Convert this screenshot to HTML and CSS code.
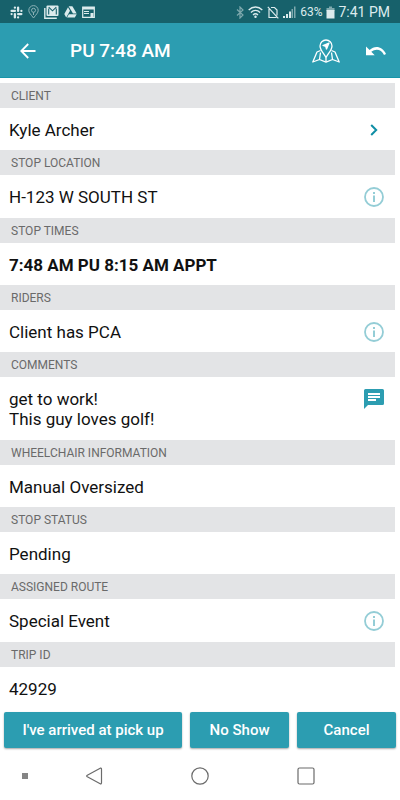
FILE: index.html
```html
<!DOCTYPE html>
<html lang="en">
<head>
    <meta charset="UTF-8">
    <meta name="viewport" content="width=device-width, initial-scale=1.0">
    <title>PU 7:48 AM</title>
    <link rel="stylesheet" href="styles.css">
</head>
<body>
    <svg class="defs" width="0" height="0">
        <symbol id="info" viewBox="0 0 20 20">
            <circle cx="10" cy="10" r="9" fill="none" stroke="currentColor" stroke-width="1.8"/>
            <path d="M9 5h2v2H9zM9 8.400h2V15H9z" fill="currentColor"/>
        </symbol>
    </svg>
    <div class="status">
        <div class="status-left">
            <svg width="13" height="13" viewBox="0 0 13 13" fill="none" stroke="#dcebed" stroke-width="2.300" stroke-linecap="round">
                <path d="M4.900 1.600v.1M1.600 4.900h3.300M8.100 1.600v3.300M11.400 4.900v0M11.400 8.100H8.100M8.100 11.400v0M4.900 11.400V8.100M1.600 8.100v0"/>
            </svg>
            <svg class="pin" width="11" height="14" viewBox="0 0 11 14" fill="none" stroke="#8db3b8">
                <path d="M5.500 13C3 9.500.8 8 .8 5.300a4.700 4.700 0 0 1 9.400 0C10.200 8 8 9.500 5.500 13z"/>
                <circle cx="5.500" cy="5.300" r="2"/>
                <path d="M5.500 7.300V10"/>
            </svg>
            <svg width="15" height="14" viewBox="0 0 15 14">
                <path d="M.8 3v10.200h12" fill="none" stroke="#dcebed" stroke-width="1.400"/>
                <rect x="2.500" y=".5" width="12" height="10.500" rx="1" fill="#dcebed"/>
                <path d="M4.700 2.200l3.800 3.600 3.800-3.600M4.700 9.500V3.500M12.300 9.500V3.500" fill="none" stroke="#17616b" stroke-width="1.100"/>
            </svg>
            <svg width="13" height="12" viewBox="0 0 13 12" fill="#dcebed">
                <path d="M4.600.3h3.800l4.300 7.200H9z"/>
                <path d="M4 1.300L6 4.700 2.200 11.400.3 8z"/>
                <path d="M4.900 8.200h7.800l-1.900 3.300H3z"/>
            </svg>
            <svg width="13" height="12" viewBox="0 0 13 12">
                <path d="M.7 1h11.600v10.300H.7z" fill="none" stroke="#dcebed" stroke-width="1.200"/>
                <path d="M.7 1h11.600v2.500H.7zM2 5h5v1H2zM2 7h5v1H2zM8.500 7h3v4h-3z" fill="#dcebed"/>
            </svg>
        </div>
        <div class="status-right">
            <svg width="8" height="13" viewBox="0 0 8 13" fill="none" stroke="#7fa9ae" stroke-width="1.200">
                <path d="M1 3.500l6 5.500-3 3V1l3 3-6 5.500"/>
            </svg>
            <svg width="15" height="12" viewBox="0 0 15 12" fill="none" stroke="#dcebed" stroke-width="1.300">
                <path d="M.7 4c4-4 9.600-4 13.600 0M2.900 6.500c2.800-2.800 6.400-2.800 9.200 0M5 9c1.500-1.500 3.500-1.500 5 0"/>
                <circle cx="7.500" cy="10.700" r=".6"/>
            </svg>
            <svg width="12" height="13" viewBox="0 0 12 13" fill="none" stroke="#dcebed" stroke-width="1.200">
                <path d="M4 1.500h3.500L10 4v5.500M2 3v8.500h7.500M.8.8l10.500 11.500"/>
            </svg>
            <svg width="13" height="12" viewBox="0 0 13 12">
                <path d="M0 10h2v2H0zM3 8h2v4H3zM6 5.500h2V12H6z" fill="#dcebed"/>
                <path d="M8.500 3h1.500v9H8.500zM11 .5h1.500V12H11z" fill="#7fa9ae"/>
            </svg>
            <span class="percent">63%</span>
            <svg width="9" height="13" viewBox="0 0 9 13">
                <path d="M3 .5h3V2h2.500v3h-8V2H3z" fill="#7fa9ae"/>
                <path d="M.5 4h8v8.500h-8z" fill="#dcebed"/>
            </svg>
            <span class="clock">7:41 PM</span>
        </div>
    </div>

    <header class="appbar">
        <button class="icon-btn" aria-label="Back">
            <svg width="16" height="16" viewBox="0 0 16 16" fill="none" stroke="#fff" stroke-width="1.800">
                <path d="M15.500 8H1.500M8.200 1L1.300 8l6.900 7"/>
            </svg>
        </button>
        <h1>PU 7:48 AM</h1>
        <button class="icon-btn" aria-label="Map">
            <svg width="28" height="24" viewBox="0 0 28 24" fill="none" stroke="#fff" stroke-width="1.300" stroke-linejoin="round">
                <path d="M14 18.500C11.500 14 8 11 8 7a6 6 0 0 1 12 0c0 4-3.500 7-6 11.500z"/>
                <path d="M17 4l-2.500 6-.8-2.700L11 6.500z" fill="#fff"/>
                <path d="M8.500 11.500L5 13 .8 23l6.700-2.500L14 23.200l6.500-2.700 6.700 2.500L23 13l-3.500-1.500"/>
                <path d="M8.500 13.500l-1 7M19.500 13.500l1 7M14 18.500v4.500"/>
            </svg>
        </button>
        <button class="icon-btn" aria-label="Undo">
            <svg width="20" height="10" viewBox="0 0 20 10">
                <path d="M0 .5v8.700h8.700L5.300 5.800C9.500 2.300 15.500 3 18 9l2-1C16.500.5 9-1.200 3.600 4.100z" fill="#fff"/>
            </svg>
        </button>
    </header>

    <main class="details">
        <h2>CLIENT</h2>
        <div class="row">
            <p>Kyle Archer</p>
            <button class="icon-btn" aria-label="Open client">
                <svg width="20" height="12" viewBox="0 0 20 12" fill="none" stroke="#0f8ea5" stroke-width="2">
                    <path d="M7.200 1l5 5-5 5"/>
                </svg>
            </button>
        </div>
        <h2>STOP LOCATION</h2>
        <div class="row">
            <p>H-123 W SOUTH ST</p>
            <button class="icon-btn info" aria-label="Location info"><svg width="20" height="20"><use href="#info"/></svg></button>
        </div>
        <h2>STOP TIMES</h2>
        <div class="row">
            <p class="strong">7:48 AM PU 8:15 AM APPT</p>
        </div>
        <h2>RIDERS</h2>
        <div class="row">
            <p>Client has PCA</p>
            <button class="icon-btn info" aria-label="Rider info"><svg width="20" height="20"><use href="#info"/></svg></button>
        </div>
        <h2>COMMENTS</h2>
        <div class="row top">
            <p>get to work!<br>This guy loves golf!</p>
            <button class="icon-btn" aria-label="Comments">
                <svg width="20" height="20" viewBox="0 0 20 20">
                    <path d="M1.500 0h17A1.500 1.500 0 0 1 20 1.500v13a1.500 1.500 0 0 1-1.500 1.500H4l-4 4V1.500A1.500 1.500 0 0 1 1.500 0z" fill="#2c9db1"/>
                    <path d="M4 4h12v2H4zM4 7h12v2H4zM4 10h8v2H4z" fill="#fff"/>
                </svg>
            </button>
        </div>
        <h2>WHEELCHAIR INFORMATION</h2>
        <div class="row">
            <p>Manual Oversized</p>
        </div>
        <h2>STOP STATUS</h2>
        <div class="row">
            <p>Pending</p>
        </div>
        <h2>ASSIGNED ROUTE</h2>
        <div class="row">
            <p>Special Event</p>
            <button class="icon-btn info" aria-label="Route info"><svg width="20" height="20"><use href="#info"/></svg></button>
        </div>
        <h2>TRIP ID</h2>
        <div class="row">
            <p>42929</p>
        </div>
    </main>

    <div class="actions">
        <button class="arrived">I've arrived at pick up</button>
        <button>No Show</button>
        <button>Cancel</button>
    </div>

    <nav class="navbar">
        <span class="dot"></span>
        <button class="icon-btn" aria-label="System back">
            <svg width="18" height="18" viewBox="0 0 18 18" fill="none" stroke="#6b6b6b" stroke-width="1.200" stroke-linejoin="round">
                <path d="M15.200 1.200L2.300 8.200q-1.200.8 0 1.600l12.900 7q1.300.3 1.300-1V2.200q0-1.300-1.300-1z"/>
            </svg>
        </button>
        <button class="icon-btn" aria-label="Home">
            <svg width="18" height="18" viewBox="0 0 18 18" fill="none" stroke="#6b6b6b" stroke-width="1.200">
                <circle cx="9" cy="9" r="8.200"/>
            </svg>
        </button>
        <button class="icon-btn" aria-label="Recent apps">
            <svg width="18" height="18" viewBox="0 0 18 18" fill="none" stroke="#6b6b6b" stroke-width="1.200">
                <rect x="1" y="1" width="16" height="16" rx="1.500"/>
            </svg>
        </button>
    </nav>
</body>
</html>
```
FILE: styles.css
```css
*{
    box-sizing: border-box;
}
body{
    margin: 0;
    min-height: 100vh;
    display: flex;
    flex-direction: column;
    background: #fff;
    color: #111;
    font-family: Roboto, "Liberation Sans", sans-serif;
}
h1, h2, p{
    margin: 0;
}
button{
    font-family: inherit;
    border: 0;
    padding: 0;
    cursor: pointer;
}
svg{
    display: block;
    flex: none;
}
.defs{
    position: absolute;
}
.icon-btn{
    background: none;
}
.status{
    height: 23px;
    padding: 1px 10px 0;
    display: flex;
    justify-content: space-between;
    background: #17616b;
    color: #dcebed;
    font-size: 14px;
}
.status-left, .status-right{
    display: flex;
    align-items: center;
    gap: 4px;
}
.status-left{
    gap: 5px;
}
.percent{
    font-size: 12px;
}
.clock{
    margin-left: -1px;
}
.appbar{
    height: 55px;
    padding: 1px 14px 0 20px;
    display: flex;
    align-items: center;
    gap: 26px;
    background: #2c9db1;
    border-bottom: 1px solid #1795a9;
    color: #fff;
}
.appbar h1{
    flex: 1;
    padding-left: 8px;
    font-size: 19px;
    font-weight: 500;
    line-height: 24px;
}
.details{
    flex: 1;
    padding-top: 5px;
    display: flex;
    flex-direction: column;
}
.details h2{
    height: 25px;
    margin-right: 5px;
    padding-left: 11px;
    background: #e3e4e6;
    color: #6a6a6a;
    font-size: 12px;
    font-weight: 400;
    line-height: 26px;
}
/* rows share whatever height is left over */
.row{
    flex: 1 0 auto;
    min-height: 42px;
    padding: 12px 16px 10px 9px;
    display: flex;
    align-items: center;
    justify-content: space-between;
    font-size: 17px;
    line-height: 20px;
}
.row.top{
    align-items: flex-start;
}
.strong{
    font-weight: 700;
}
.info{
    color: #94cdd6;
}
.actions{
    padding: 3px 4px 0;
    display: flex;
    gap: 8px;
}
.actions button{
    flex: 5;
    height: 36px;
    border-radius: 2px;
    background: #2c9db1;
    box-shadow: 0 1px 2px rgba(0, 0, 0, 0.35);
    color: #fff;
    font-size: 15px;
    font-weight: 500;
}
.actions .arrived{
    flex: 9;
}
.navbar{
    height: 52px;
    padding: 4px 85px 0 22px;
    display: flex;
    align-items: center;
    justify-content: space-between;
}
.dot{
    width: 6px;
    height: 6px;
    margin-right: -31px;
    background: #858585;
}
```
